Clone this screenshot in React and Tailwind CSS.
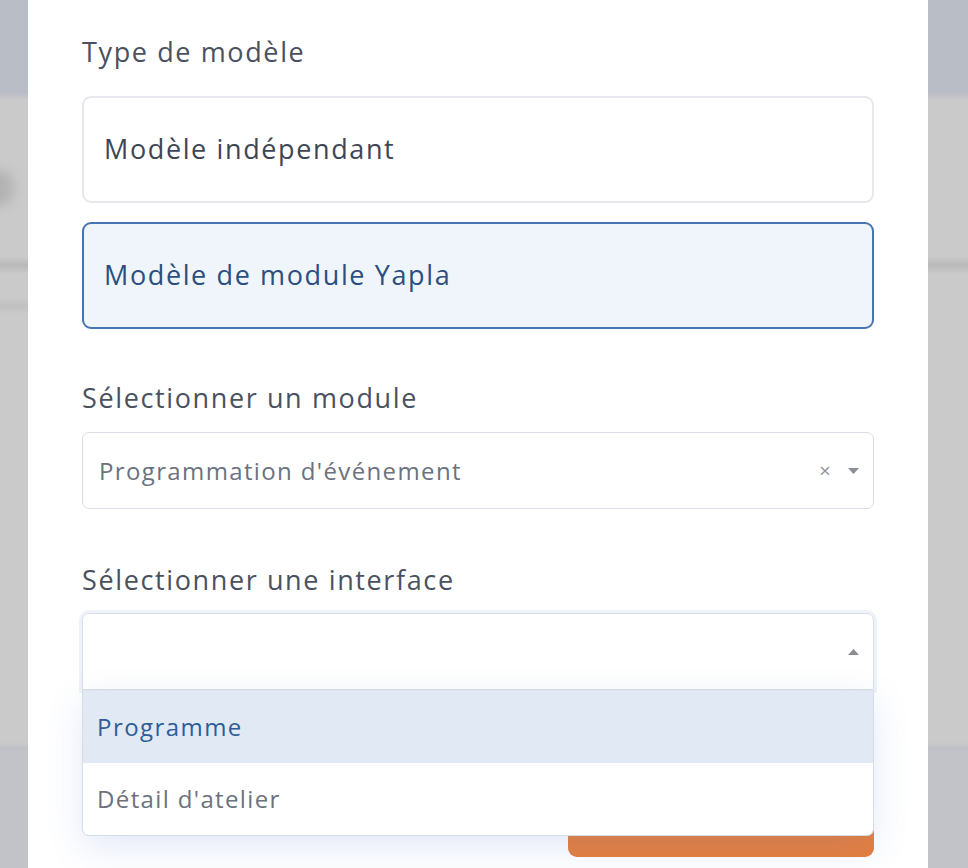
import React from "react";

function Strip({ right }) {
  return (
    <div className={`flex flex-col h-full ${right ? "w-[40px]" : "w-[28px]"} shrink-0 relative overflow-hidden`}>
      <div className="h-[92px] bg-[#b9bdc6]" />
      <div className="h-[8px] bg-gradient-to-b from-[#b9bdc6] to-[#c9c9c9]" />
      <div className="flex-1 bg-[#cacaca] flex flex-col">
        <div className="h-[156px]" />
        <div className="h-[18px] bg-gradient-to-b from-[#cacaca] via-[#b9b9b9] to-[#cacaca]" />
        <div className="h-[24px]" />
        <div className={`h-[16px] bg-gradient-to-b from-[#cacaca] ${right ? "via-[#cacaca]" : "via-[#c0c0c0]"} to-[#cacaca]`} />
        <div className="flex-1" />
      </div>
      <div className="h-[8px] bg-gradient-to-b from-[#cacaca] to-[#bcbfc8]" />
      <div className="h-[118px] bg-[#c2c3c8]" />
      {!right && (
        <div className="absolute left-[-22px] top-[170px] w-[36px] h-[36px] rounded-full bg-[#b2b2b2] blur-[6px]" />
      )}
    </div>
  );
}

function Caret({ up }) {
  return (
    <svg width="11" height="6" viewBox="0 0 11 6" className="block">
      {up ? (
        <path d="M0 6 L5.5 0 L11 6 Z" fill="#8a8e96" />
      ) : (
        <path d="M0 0 L5.5 6 L11 0 Z" fill="#8a8e96" />
      )}
    </svg>
  );
}

export default function App() {
  const font = { fontFamily: "'Open Sans', 'Noto Sans', sans-serif" };
  return (
    <div className="w-[968px] h-[868px] flex overflow-hidden" style={font}>
      <Strip />
      <div className="w-[900px] h-full bg-white shrink-0 px-[54px] pt-[34px] flex flex-col">
        <div className="h-[36px] leading-[36px] text-[27px] tracking-[0.06em] text-[#4a5160]">Type de modèle</div>
        <div className="mt-[26px] h-[107px] border-2 border-[#e6e8ee] rounded-[9px] flex items-center px-[20px] text-[27px] tracking-[0.06em] font-medium text-[#3e4655]">
          Modèle indépendant
        </div>
        <div className="mt-[19px] h-[107px] border-2 border-[#4676b2] bg-[#f0f4fb] rounded-[9px] flex items-center px-[20px] text-[27px] tracking-[0.06em] font-medium text-[#2b4f7e]">
          Modèle de module Yapla
        </div>
        <div className="mt-[51px] h-[36px] leading-[36px] text-[27px] tracking-[0.06em] text-[#4a5160]">Sélectionner un module</div>
        <div className="mt-[16px] h-[77px] border border-[#d9dee6] rounded-[7px] flex items-center pl-[16px] pr-[14px] text-[24px] tracking-[0.057em] text-[#6b727e]">
          <span className="flex-1">Programmation d'événement</span>
          <span className="text-[20px] text-[#8f939a] mr-[16px] leading-none">×</span>
          <Caret />
        </div>
        <div className="mt-[53px] h-[36px] leading-[36px] text-[27px] tracking-[0.06em] text-[#4a5160]">Sélectionner une interface</div>
        <div className="relative mt-[15px]">
          <div className="h-[77px] border border-[#d9dee6] rounded-t-[7px] flex items-center justify-end pr-[14px] ring-[3px] ring-[#eef2f9]">
            <Caret up />
          </div>
          <div className="absolute left-0 right-0 top-[77px] z-10 bg-white border border-[#d6dce6] border-t-[#dfe4ec] rounded-b-[7px] shadow-[0_12px_36px_rgba(90,120,210,0.16)] overflow-hidden">
            <div className="h-[72px] bg-[#e1e9f5] flex items-center pl-[14px] text-[24px] tracking-[0.06em] font-medium text-[#2e5d96]">Programme</div>
            <div className="h-[72px] flex items-center pl-[14px] text-[24px] tracking-[0.057em] text-[#6b727e]">Détail d'atelier</div>
          </div>
          <div className="mt-[113px] ml-auto w-[306px] h-[54px] bg-[#e67f3d] rounded-[9px]" />
        </div>
      </div>
      <Strip right />
    </div>
  );
}
